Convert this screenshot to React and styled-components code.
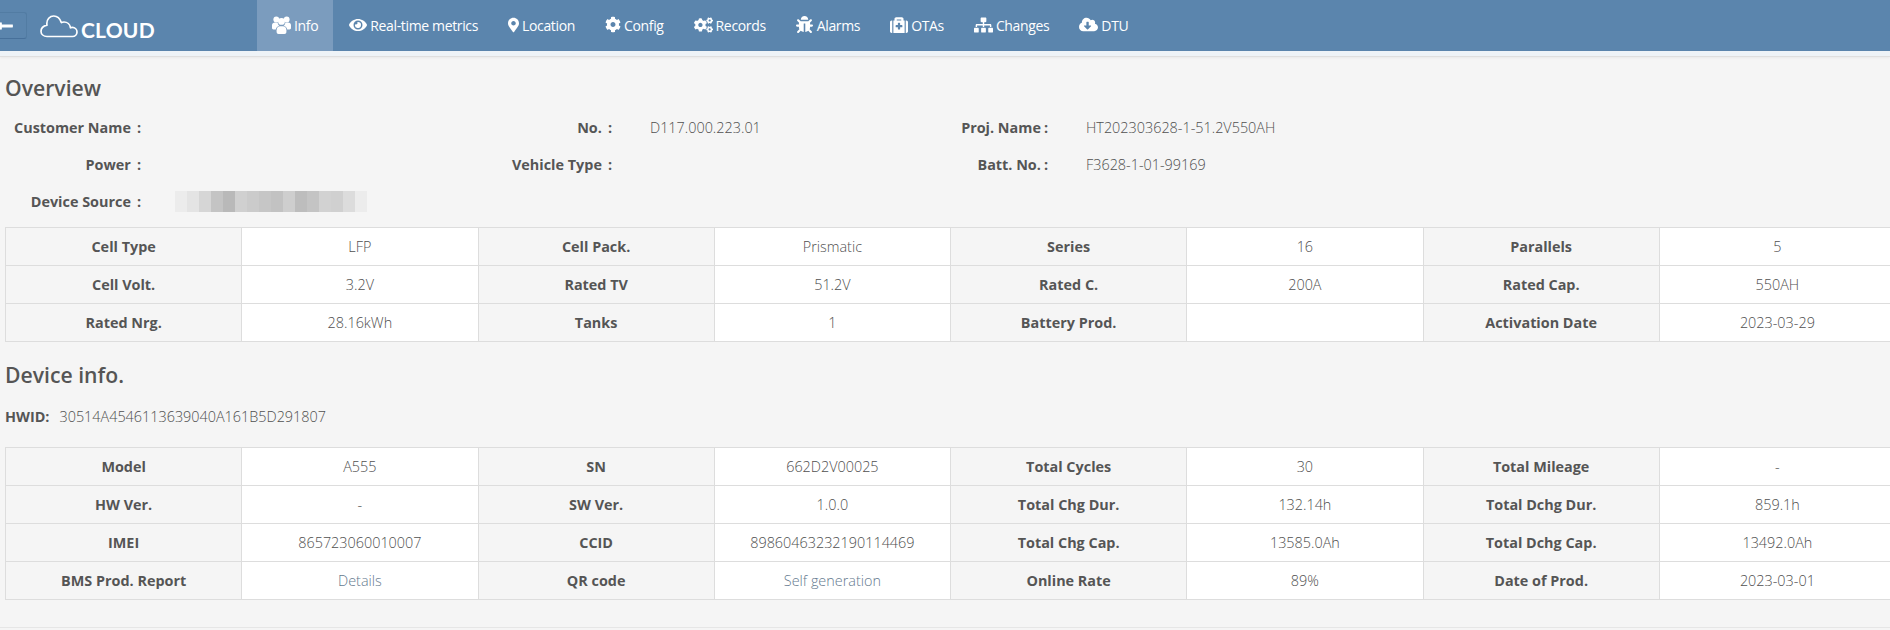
import React from "react";
import styled, { createGlobalStyle } from "styled-components";
import {
  FaEye,
  FaMapMarkerAlt,
  FaCog,
  FaCogs,
  FaBug,
  FaMedkit,
  FaSitemap,
  FaCloudDownloadAlt,
  FaLongArrowAltLeft,
} from "react-icons/fa";

const GlobalStyle = createGlobalStyle`
  html, body {
    margin: 0;
    padding: 0;
    height: 100%;
    overflow: hidden;
    background: #f5f5f5;
    font-family: "Open Sans", "Noto Sans", sans-serif;
    color: #555;
  }
`;

const Page = styled.div`
  width: 1890px;
  height: 630px;
  overflow: hidden;
`;

const TopBar = styled.header`
  display: flex;
  align-items: stretch;
  height: 51px;
  background: #5b85ad;
  color: #fff;
`;

const BackButton = styled.button`
  align-self: center;
  width: 47px;
  height: 27px;
  margin: 0 13px 0 -20px;
  padding: 0 0 0 15px;
  display: flex;
  align-items: center;
  background: #5b85ad;
  border: 1px solid #527ca3;
  border-bottom-color: #47709a;
  border-radius: 3px;
  color: #fff;
  font-size: 18px;
  line-height: 1;
`;

const Brand = styled.div`
  display: flex;
  align-items: center;
  width: 217px;
`;

const BrandName = styled.span`
  margin: 7px 0 0 3px;
  font-family: Lato, sans-serif;
  font-size: 21px;
  font-weight: 700;
  letter-spacing: 0.2px;
`;

const Nav = styled.nav`
  display: flex;
  align-items: stretch;
`;

const Tab = styled.a`
  display: flex;
  align-items: center;
  gap: 3px;
  padding: 0 15px;
  font-size: 14px;
  letter-spacing: -0.35px;
  color: #fff;
  background: ${(p) => (p.$active ? "#7b9cbe" : "transparent")};
`;

const TabIcon = styled.span`
  display: flex;
  align-items: center;
  justify-content: center;
  width: ${(p) => p.$width}px;
  margin-top: -2px;
`;

const BarEdge = styled.div`
  height: 5px;
  background: #eef3f7;
  border-bottom: 1px solid #dfdfdf;
  box-shadow: 0 1px 3px rgba(0, 0, 0, 0.05);
`;

const Content = styled.main`
  padding: 0 0 0 5px;
`;

const Heading = styled.h2`
  margin: 0;
  height: 30px;
  font-size: 21.2px;
  line-height: 30px;
  font-weight: 600;
  color: #555;
`;

const OverviewHeading = styled(Heading)`
  padding-top: 16px;
`;

const DeviceHeading = styled(Heading)`
  padding-top: 18px;
`;

const Summary = styled.div`
  display: grid;
  grid-template-columns: 136px 333px 138px 298px 138px 1fr;
  grid-auto-rows: 37px;
  align-items: center;
  margin-top: 6px;
  margin-bottom: 7px;
`;

const SummaryLabel = styled.div`
  text-align: right;
  font-size: 14.4px;
  font-weight: 700;
  white-space: nowrap;
`;

const Colon = styled.span`
  margin-left: ${(p) => p.$gap}px;
`;

const SummaryValue = styled.div`
  display: flex;
  padding-left: 38px;
  font-size: 14.4px;
  font-weight: 300;
  color: #4f4f4f;
`;

const Mosaic = styled.div`
  display: flex;
  align-items: stretch;
  height: 21px;
  margin-left: -4px;
`;

const MosaicCell = styled.span`
  width: 12px;
`;

const InfoTable = styled.table`
  width: 1891px;
  table-layout: fixed;
  border-collapse: collapse;
`;

const LabelCell = styled.th`
  height: 37px;
  padding: 0;
  background: #f5f5f5;
  border: 1px solid #ddd;
  font-size: 14.4px;
  font-weight: 700;
  color: #555;
`;

const ValueCell = styled.td`
  height: 37px;
  padding: 0;
  background: #fff;
  border: 1px solid #ddd;
  text-align: center;
  font-size: 14.4px;
  font-weight: 300;
  color: #4f4f4f;
`;

const TextLink = styled.a`
  color: #64798e;
`;

const HwidRow = styled.div`
  display: flex;
  gap: 10px;
  align-items: center;
  height: 20px;
  margin: 16px 0 21px;
  font-size: 14.4px;
`;

const HwidLabel = styled.strong`
  font-weight: 700;
`;

const HwidValue = styled.span`
  font-weight: 300;
  color: #4f4f4f;
`;

const PageEnd = styled.div`
  margin: 27px 0 0 -5px;
  border-top: 1px solid #e6e6e6;
`;

function UsersIcon() {
  return (
    <svg width="19" height="18" viewBox="0 0 19 18" fill="#fff">
      <circle cx="4.3" cy="3.4" r="2.9" />
      <circle cx="14.7" cy="3.4" r="2.9" />
      <circle cx="9.5" cy="5.4" r="3.4" />
      <path d="M0 9.2C0 7.6 1.4 6.6 3 6.6H5.6C5.8 8 6.4 9.2 7.4 9.8C5.6 10.4 4.2 11.6 3.8 13.4H1.4C.6 13.4 0 12.8 0 12Z" />
      <path d="M19 9.2C19 7.6 17.6 6.6 16 6.6H13.4C13.2 8 12.6 9.2 11.6 9.8C13.4 10.4 14.8 11.6 15.2 13.4H17.6C18.4 13.4 19 12.8 19 12Z" />
      <path d="M4.6 14.2C4.6 11.8 6.2 10.2 8 10.2H11C12.8 10.2 14.4 11.8 14.4 14.2V16C14.4 17.2 13.6 18 12.4 18H6.6C5.4 18 4.6 17.2 4.6 16Z" />
    </svg>
  );
}

const tabs = [
  { label: "Info", width: 19, icon: <UsersIcon /> },
  { label: "Real-time metrics", width: 19, icon: <FaEye size={18} /> },
  { label: "Location", width: 11, icon: <FaMapMarkerAlt size={16} /> },
  { label: "Config", width: 16, icon: <FaCog size={17} /> },
  { label: "Records", width: 19, icon: <FaCogs size={20} /> },
  { label: "Alarms", width: 18, icon: <FaBug size={17} /> },
  { label: "OTAs", width: 18, icon: <FaMedkit size={18} /> },
  { label: "Changes", width: 19, icon: <FaSitemap size={20} /> },
  { label: "DTU", width: 19, icon: <FaCloudDownloadAlt size={21} /> },
];

const mosaicShades = [
  "#ececec", "#e4e4e4", "#d6d6d6", "#c4c4c4", "#b9b9b9", "#d0d0d0",
  "#cbcbcb", "#c6c6c6", "#c2c2c2", "#cecece", "#bdbdbd", "#c4c4c4",
  "#d2d2d2", "#d0d0d0", "#dcdcdc", "#ececec",
];

const specRows = [
  ["Cell Type", "LFP", "Cell Pack.", "Prismatic", "Series", "16", "Parallels", "5"],
  ["Cell Volt.", "3.2V", "Rated TV", "51.2V", "Rated C.", "200A", "Rated Cap.", "550AH"],
  ["Rated Nrg.", "28.16kWh", "Tanks", "1", "Battery Prod.", "", "Activation Date", "2023-03-29"],
];

const deviceRows = [
  ["Model", "A555", "SN", "662D2V00025", "Total Cycles", "30", "Total Mileage", "-"],
  ["HW Ver.", "-", "SW Ver.", "1.0.0", "Total Chg Dur.", "132.14h", "Total Dchg Dur.", "859.1h"],
  ["IMEI", "865723060010007", "CCID", "89860463232190114469", "Total Chg Cap.", "13585.0Ah", "Total Dchg Cap.", "13492.0Ah"],
  ["BMS Prod. Report", "Details", "QR code", "Self generation", "Online Rate", "89%", "Date of Prod.", "2023-03-01"],
];

const links = ["Details", "Self generation"];

function CloudLogo() {
  return (
    <svg width="38" height="24" viewBox="0 0 38 24" fill="none" stroke="#fff" strokeWidth="1.7" strokeLinejoin="round">
      <path d="M7 22.5H32.5C35 22.5 37 20.5 37 18C37 15.5 35 13.4 32.4 13.4C31.6 13.4 31 13.5 30.5 13.8C30 10.4 27.2 8 24 8C23 8 22 8.2 21.4 8.6C20 4.6 17 2 13.8 2C9.6 2 6.8 5.4 6.8 9.4C6.8 10 6.9 10.6 7 11.2C3.6 12 1 14.2 1 17.2C1 20.2 3.6 22.5 7 22.5Z" />
    </svg>
  );
}

function DataTable({ rows }) {
  return (
    <InfoTable>
      <tbody>
        {rows.map((row) => (
          <tr key={row[0]}>
            {row.map((text, i) =>
              i % 2 === 0 ? (
                <LabelCell key={i}>{text}</LabelCell>
              ) : (
                <ValueCell key={i}>
                  {links.includes(text) ? <TextLink>{text}</TextLink> : text}
                </ValueCell>
              )
            )}
          </tr>
        ))}
      </tbody>
    </InfoTable>
  );
}

export default function App() {
  return (
    <Page>
      <GlobalStyle />
      <TopBar>
        <BackButton>
          <FaLongArrowAltLeft />
        </BackButton>
        <Brand>
          <CloudLogo />
          <BrandName>CLOUD</BrandName>
        </Brand>
        <Nav>
          {tabs.map(({ label, width, icon }, i) => (
            <Tab key={label} $active={i === 0}>
              <TabIcon $width={width}>{icon}</TabIcon>
              {label}
            </Tab>
          ))}
        </Nav>
      </TopBar>
      <BarEdge />
      <Content>
        <OverviewHeading>Overview</OverviewHeading>
        <Summary>
          <SummaryLabel>Customer Name<Colon $gap={6}>:</Colon></SummaryLabel>
          <SummaryValue />
          <SummaryLabel>No.<Colon $gap={6}>:</Colon></SummaryLabel>
          <SummaryValue>D117.000.223.01</SummaryValue>
          <SummaryLabel>Proj. Name<Colon $gap={3}>:</Colon></SummaryLabel>
          <SummaryValue>HT202303628-1-51.2V550AH</SummaryValue>
          <SummaryLabel>Power<Colon $gap={6}>:</Colon></SummaryLabel>
          <SummaryValue />
          <SummaryLabel>Vehicle Type<Colon $gap={6}>:</Colon></SummaryLabel>
          <SummaryValue />
          <SummaryLabel>Batt. No.<Colon $gap={3}>:</Colon></SummaryLabel>
          <SummaryValue>F3628-1-01-99169</SummaryValue>
          <SummaryLabel>Device Source<Colon $gap={6}>:</Colon></SummaryLabel>
          <SummaryValue>
            <Mosaic>
              {mosaicShades.map((shade, i) => (
                <MosaicCell key={i} style={{ background: shade }} />
              ))}
            </Mosaic>
          </SummaryValue>
        </Summary>
        <DataTable rows={specRows} />
        <DeviceHeading>Device info.</DeviceHeading>
        <HwidRow>
          <HwidLabel>HWID:</HwidLabel>
          <HwidValue>30514A4546113639040A161B5D291807</HwidValue>
        </HwidRow>
        <DataTable rows={deviceRows} />
        <PageEnd />
      </Content>
    </Page>
  );
}
